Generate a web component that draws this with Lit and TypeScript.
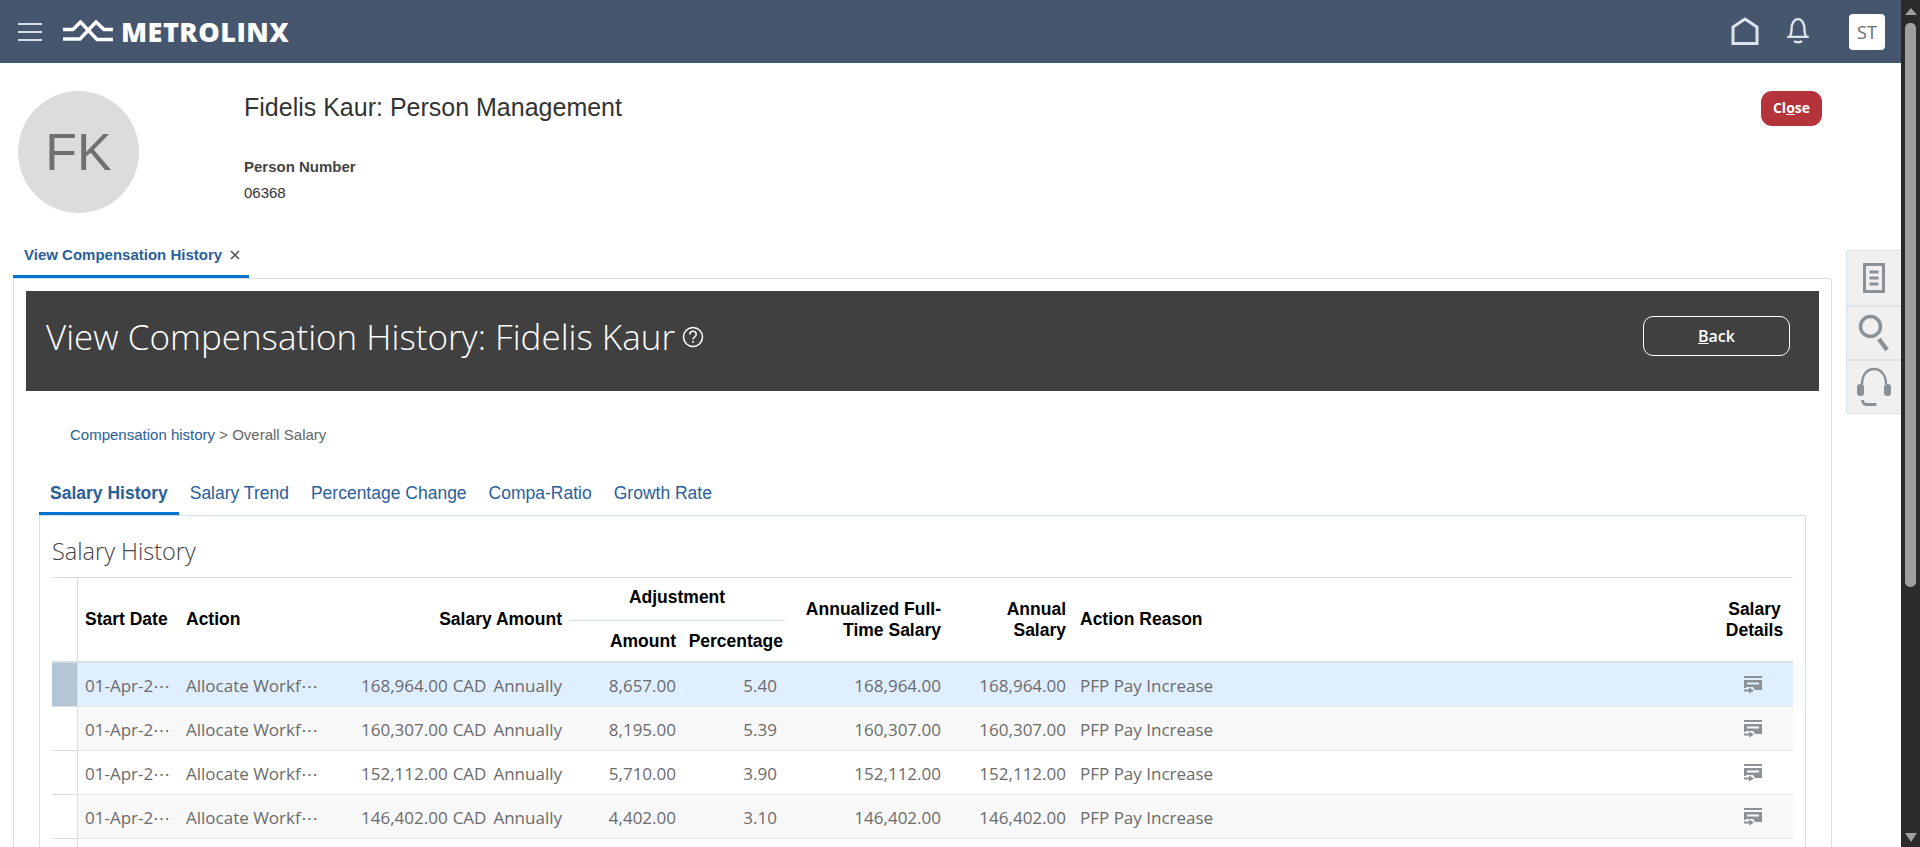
import { LitElement, html, css } from "lit";
import { customElement } from "lit/decorators.js";

const rows = [
  ["168,964.00", "8,657.00", "5.40"],
  ["160,307.00", "8,195.00", "5.39"],
  ["152,112.00", "5,710.00", "3.90"],
  ["146,402.00", "4,402.00", "3.10"],
];
const widths = [26, 101, 152, 238, 114, 102, 163, 125, 643, 77];

const detailIcon = html`<svg class="detail" width="18" height="18" viewBox="0 0 18 18" fill="#8c9196">
  <path d="M0 0h18v2H0z"/>
  <path fill-rule="evenodd" d="M0 4h18v10h-7l-2-3H2v1H0zM3 6.500v2h12v-2z"/>
  <path d="M0 13.500h5v-2l5 3-5 3v-2H0z"/>
</svg>`;

@customElement("app-root")
export class AppRoot extends LitElement {
  static styles = css`
    :host { display: flex; width: 1920px; height: 847px; overflow: hidden; background: #fff; font-family: "Liberation Sans", Arial, sans-serif; }
    .page { width: 1901px; height: 847px; overflow: hidden; flex: none; position: relative; }
    .scrollbar { width: 19px; height: 847px; background: #2b2b2b; display: flex; flex-direction: column; align-items: center; flex: none; }
    .arrow-up { width: 0; height: 0; margin-top: 8px; border-left: 6px solid transparent; border-right: 6px solid transparent; border-bottom: 7px solid #9f9f9f; }
    .thumb { width: 11px; height: 564px; background: #9f9f9f; border-radius: 5px; margin-top: 8px; }
    .arrow-down { width: 0; height: 0; margin-top: auto; margin-bottom: 5px; border-left: 6px solid transparent; border-right: 6px solid transparent; border-top: 9px solid #9f9f9f; }

    .topbar { height: 63px; background: #46566f; display: flex; align-items: center; }
    .burger { margin-left: 18px; display: block; }
    .logo { margin-left: 20px; display: block; }
    .brand { margin-left: 8px; color: #fff; font: 800 27px "Open Sans", sans-serif; letter-spacing: 0.5px; line-height: 63px; }
    .top-right { margin-left: auto; display: flex; align-items: center; margin-right: 16px; }
    .home { display: block; margin-top: -2px; }
    .bell { display: block; margin-left: 27px; margin-right: -2px; margin-top: -2px; }
    .st { width: 36px; height: 36px; background: #fff; border-radius: 4px; margin-left: 41px; display: flex; align-items: center; justify-content: center; color: #6b6b6b; font: 400 18px "Open Sans", sans-serif; }

    .person { height: 184px; padding: 28px 79px 0 18px; box-sizing: border-box; display: flex; align-items: flex-start; }
    .avatar { width: 121px; height: 122px; border-radius: 50%; background: #dcdcdc; color: #707070; font-size: 52px; display: flex; align-items: center; justify-content: center; flex: none; }
    .info { margin-left: 105px; padding-top: 1px; flex: 1; }
    .info h1 { margin: 0; font-size: 25px; font-weight: 400; color: #333; line-height: 30px; }
    .info .lbl { margin-top: 36px; font-size: 15px; font-weight: 700; color: #444; line-height: 18px; }
    .info .val { margin-top: 8px; font-size: 15px; color: #333; line-height: 18px; }
    .close { width: 61px; height: 35px; padding-bottom: 2px; box-sizing: border-box; background: #b5333a; color: #fff; border-radius: 11px; font: 700 14px "Open Sans", sans-serif; display: flex; align-items: center; justify-content: center; }

    .ptabs { margin-left: 13px; height: 31px; display: flex; }
    .ptab { width: 236px; height: 31px; box-sizing: border-box; border-bottom: 3px solid #0572ce; color: #2a6099; font-size: 15px; font-weight: 700; padding-left: 11px; display: flex; align-items: flex-start; line-height: 15px; }
    .ptab svg { margin-left: 8px; margin-top: 3px; }

    .panel { margin-left: 13px; width: 1819px; box-sizing: border-box; height: 569px; border: 1px solid #d6dfe6; border-bottom: 0; padding: 12px 12px 0 12px; border-radius: 0 3px 0 0; }
    .banner { height: 100px; box-sizing: border-box; background: #404040; display: flex; align-items: center; padding: 0 0 10px 20px; color: #fff; }
    .banner h2 { margin: 0; font: 300 35px "Open Sans", sans-serif; white-space: nowrap; }
    .help { margin-left: 7px; margin-top: 2px; }
    .back { margin-left: auto; margin-right: 29px; width: 147px; height: 40px; box-sizing: border-box; border: 1px solid #fff; border-radius: 10px; display: flex; align-items: center; justify-content: center; font: 600 16px "Open Sans", sans-serif; }

    .crumb { margin: 35px 0 0 44px; font-size: 15px; line-height: 18px; color: #666; }
    .crumb a { color: #2a6099; }

    .stabs { margin: 30px 0 0 13px; height: 41px; display: flex; align-items: flex-start; font-size: 17.500px; color: #2a6099; line-height: 22px; }
    .stab { padding: 8px 11px 0; height: 41px; box-sizing: border-box; }
    .stab.on { font-weight: 700; border-bottom: 3px solid #0572ce; }

    .box { margin-left: 13px; width: 1767px; box-sizing: border-box; height: 340px; border: 1px solid #d6dfe6; border-bottom: 0; padding: 0 12px; border-radius: 0 3px 0 0; }
    .box h3 { margin: 0; height: 61px; box-sizing: border-box; padding-top: 9px; font: 300 23.500px/52px "Open Sans", sans-serif; color: #444; }

    table { border-collapse: separate; border-spacing: 0; table-layout: fixed; width: 1741px; border-top: 1px solid #d6dfe6; }
    th { font-size: 17.500px; color: #000; font-weight: 700; line-height: 21px; padding: 0 7px; }
    thead th { border-bottom: 2px solid #d6dfe6; }
    th.l, td.l { text-align: left; }
    th.r, td.r { text-align: right; }
    th.c { text-align: center; }
    tr.h1 th { height: 43px; box-sizing: border-box; }
    tr.h1 th.adj { padding-bottom: 3px; }
    tr.h2 th { height: 42px; box-sizing: border-box; }
    thead th.adj { border-bottom: 1px solid #d6dfe6; }
    th.hdr { border-right: 1px solid #d6dfe6; padding: 0; }
    td { height: 44px; box-sizing: border-box; padding: 2px 7px 0; font: 400 17px "Open Sans", sans-serif; color: #6b6b6b; border-bottom: 1px solid #e8e8e8; white-space: nowrap; overflow: hidden; }
    td.rh { padding: 0; border-right: 1px solid #d6dfe6; border-bottom: 1px solid #d6dfe6; background: #fff; }
    tr.sel td { background: #e0efff; }
    tr.sel td.rh { background: #b3c6d6; }
    tr.alt td:not(.rh) { background: #f8f8f8; }
    .amt { display: flex; justify-content: flex-end; gap: 5px; }
    .amt .cad { margin-right: 2px; }
    td.pct { padding-right: 8px; }
    th.nar { padding-right: 2px; padding-left: 0; }
    tr.rest td { border-bottom: 0; }
    tr.rest td.rh { border-bottom: 0; }
    .detail { display: block; margin: -2px 0 0 21px; }

    .side { position: absolute; left: 1846px; top: 250px; width: 55px; box-sizing: border-box; border: 1px solid #dbe2e8; border-right: 0; background: #f0f0f0; }
    .side div { height: 54px; display: flex; align-items: center; justify-content: center; box-sizing: border-box; }
    .side div + div { border-top: 2px solid #dbe2e8; }
  `;

  render() {
    return html`
      <div class="page">
        <div class="topbar">
          <svg class="burger" width="24" height="18" viewBox="0 0 24 18" fill="#d8dfe8"><rect y="0" width="24" height="2"/><rect y="8" width="24" height="2"/><rect y="16" width="24" height="2"/></svg>
          <svg class="logo" width="51" height="23" viewBox="0 0 51 23" fill="none" stroke="#fff" stroke-width="3.500">
            <path d="M1 9.500h10l7.500-7.500L35 19.500h16"/>
            <path d="M1 19h17L34 2l8 7.500h9"/>
          </svg>
          <span class="brand">METROLINX</span>
          <div class="top-right">
            <svg class="home" width="28" height="28" viewBox="0 0 28 28" fill="none" stroke="#dde3ea" stroke-width="3"><path d="M2 26.500V10L14 2l12 8v16.500z"/></svg>
            <svg class="bell" width="24" height="28" viewBox="0 0 22 26" fill="none" stroke="#dde3ea" stroke-width="2.200"><path d="M1 18.500h20M3.500 18c1.500-2 1.500-4 1.500-7 0-5 2.500-9 6-9s6 4 6 9c0 3 0 5 1.500 7"/><path d="M7.500 22c1 2 6 2 7 0"/></svg>
            <div class="st">ST</div>
          </div>
        </div>

        <div class="person">
          <div class="avatar">FK</div>
          <div class="info">
            <h1>Fidelis Kaur: Person Management</h1>
            <div class="lbl">Person Number</div>
            <div class="val">06368</div>
          </div>
          <div class="close"><span>Cl<u>o</u>se</span></div>
        </div>

        <div class="ptabs">
          <div class="ptab">View Compensation History
            <svg width="10" height="10" viewBox="0 0 10 10" stroke="#555" stroke-width="1.600"><path d="M1 1l8 8M9 1l-8 8"/></svg>
          </div>
        </div>

        <div class="panel">
          <div class="banner">
            <h2>View Compensation History: Fidelis Kaur</h2>
            <svg class="help" width="22" height="22" viewBox="0 0 22 22" fill="none" stroke="#fff" stroke-width="1.500"><circle cx="11" cy="11" r="9.500"/><path d="M7.800 8.500c0-4.200 6.400-4.200 6.400 0 0 2.500-3.200 2.500-3.200 5"/><path d="M11 15v2"/></svg>
            <div class="back"><span><u>B</u>ack</span></div>
          </div>
          <div class="crumb"><a>Compensation history</a> &gt; Overall Salary</div>
          <div class="stabs">
            <div class="stab on">Salary History</div>
            <div class="stab">Salary Trend</div>
            <div class="stab">Percentage Change</div>
            <div class="stab">Compa-Ratio</div>
            <div class="stab">Growth Rate</div>
          </div>
          <div class="box">
            <h3>Salary History</h3>
            <table>
              <colgroup>${widths.map((w) => html`<col style="width:${w}px" />`)}</colgroup>
              <thead>
                <tr class="h1">
                  <th class="hdr" rowspan="2"></th>
                  <th class="l" rowspan="2">Start Date</th>
                  <th class="l" rowspan="2">Action</th>
                  <th class="r" rowspan="2">Salary Amount</th>
                  <th class="c adj" colspan="2">Adjustment</th>
                  <th class="r" rowspan="2">Annualized Full-<br />Time Salary</th>
                  <th class="r" rowspan="2">Annual<br />Salary</th>
                  <th class="l" rowspan="2">Action Reason</th>
                  <th class="c" rowspan="2">Salary<br />Details</th>
                </tr>
                <tr class="h2">
                  <th class="r">Amount</th>
                  <th class="r nar">Percentage</th>
                </tr>
              </thead>
              <tbody>
                ${rows.map(
                  (r, i) => html`<tr class="${i === 0 ? "sel" : i % 2 ? "alt" : ""}">
                    <td class="rh"></td>
                    <td>01-Apr-2⋯</td>
                    <td>Allocate Workf⋯</td>
                    <td><div class="amt"><span>${r[0]}</span><span class="cad">CAD</span><span>Annually</span></div></td>
                    <td class="r">${r[1]}</td>
                    <td class="r pct">${r[2]}</td>
                    <td class="r">${r[0]}</td>
                    <td class="r">${r[0]}</td>
                    <td>PFP Pay Increase</td>
                    <td>${detailIcon}</td>
                  </tr>`
                )}
                <tr class="rest"><td class="rh"></td><td colspan="9"></td></tr>
              </tbody>
            </table>
          </div>
        </div>

        <div class="side">
          <div><svg width="24" height="32" viewBox="0 0 24 32" fill="none" stroke="#8c9196" stroke-width="3"><path d="M2.500 2.500h19v27h-19z"/><path d="M7.500 10h9M7.500 16h9M7.500 22h9"/></svg></div>
          <div><svg width="32" height="40" viewBox="0 0 32 40" fill="none" stroke="#8c9196"><circle cx="12.500" cy="13.500" r="10" stroke-width="3.500"/><path d="M21 26l8 11" stroke-width="4.500"/></svg></div>
          <div><svg width="34" height="40" viewBox="0 0 34 40" fill="none" stroke="#8c9196" stroke-width="2.500"><path d="M5 17C5-3 29-3 29 17"/><rect x="0" y="17" width="7" height="12" rx="3" fill="#8c9196" stroke="none"/><rect x="27" y="17" width="7" height="12" rx="3" fill="#8c9196" stroke="none"/><path d="M5.500 33c0 3 2 4.500 4 4.500h10" stroke-width="3"/></svg></div>
        </div>
      </div>
      <div class="scrollbar"><div class="arrow-up"></div><div class="thumb"></div><div class="arrow-down"></div></div>
    `;
  }
}
